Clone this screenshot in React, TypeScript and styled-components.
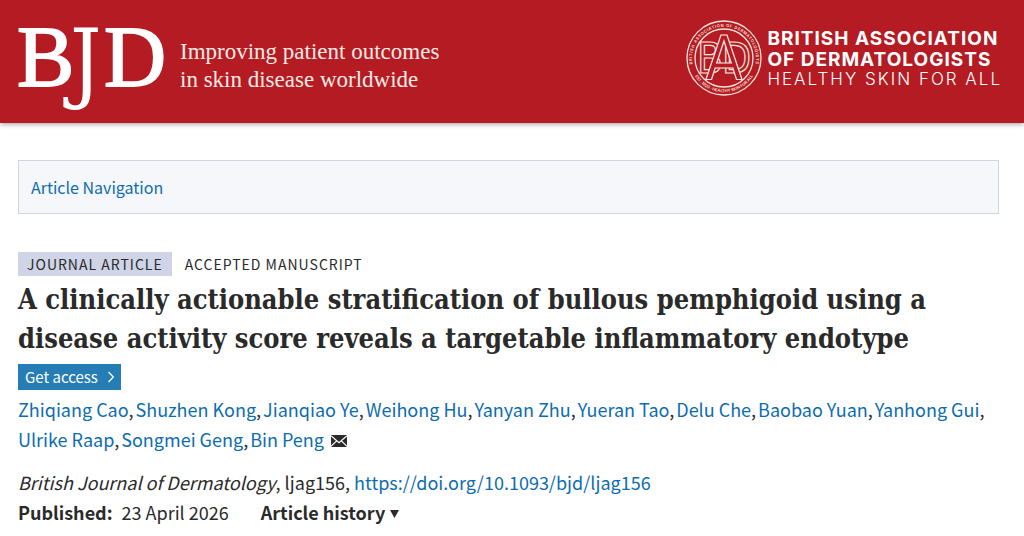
import React from "react";
import styled, { createGlobalStyle } from "styled-components";

const sans = `"Noto Sans CJK SC", "Noto Sans", sans-serif`;
const link = "#0e6cb0";
const ink = "#2a2a2a";

const GlobalStyle = createGlobalStyle`
  *, *::before, *::after { box-sizing: border-box; }
  body { margin: 0; background: #fff; color: ${ink}; font-family: ${sans}; }
`;

const Banner = styled.header`
  display: flex;
  justify-content: space-between;
  align-items: flex-start;
  padding: 20px 22px 11px 16px;
  background: #b41b22;
  color: #fff;
  box-shadow: 0 1px 5px rgba(0, 0, 0, 0.4);
`;

const Brand = styled.a`
  display: flex;
  align-items: flex-start;
  color: inherit;
  text-decoration: none;
`;

const Tagline = styled.span`
  margin: 18px 0 0 12px;
  font: 23px/28px "Liberation Serif", serif;
  color: #fdebe6;
`;

const Society = styled.a`
  display: flex;
  align-items: flex-start;
  gap: 5px;
  color: inherit;
  text-decoration: none;
`;

const SocietyName = styled.span`
  display: flex;
  flex-direction: column;
  margin-top: 8px;
  font-family: Inter, sans-serif;
`;

const SocietyLine = styled.span<{ $light?: boolean }>`
  font-size: ${(p) => (p.$light ? 17 : 19)}px;
  line-height: ${(p) => (p.$light ? 19 : 21)}px;
  font-weight: ${(p) => (p.$light ? 300 : 700)};
  letter-spacing: ${(p) => (p.$light ? 2 : 1)}px;
  white-space: nowrap;
`;

const Main = styled.main`
  padding: 37px 25px 8px 18px;
`;

const ArticleNav = styled.nav`
  display: flex;
  align-items: center;
  padding: 12px;
  border: 1px solid #cfd5e3;
  background: #f5f7fb;
  font-size: 16px;
  line-height: 28px;
`;

const TextLink = styled.a`
  color: ${link};
  text-decoration: none;
`;

const Labels = styled.div`
  display: flex;
  gap: 4px;
  margin-top: 38px;
`;

const Label = styled.span<{ $filled?: boolean }>`
  padding: 0 9px;
  background: ${(p) => (p.$filled ? "#cfd4e6" : "transparent")};
  font-size: 14px;
  line-height: 24px;
  letter-spacing: 1px;
  text-transform: uppercase;
`;

const Title = styled.h1`
  margin: 4px 0 6px;
  font: 700 27px/39px "DejaVu Serif Condensed", "DejaVu Serif", serif;
`;

const Access = styled.a`
  display: flex;
  width: fit-content;
  align-items: center;
  gap: 9px;
  padding: 0 6px 0 7px;
  background: #267db6;
  color: #fff;
  font-size: 15px;
  line-height: 26px;
  text-decoration: none;
`;

const Authors = styled.ul`
  display: flex;
  flex-wrap: wrap;
  gap: 0 2px;
  margin: 4px 0 0;
  padding: 0;
  list-style: none;
  font-size: 18px;
  line-height: 30px;
  svg { margin-left: 7px; }
`;

const Details = styled.div`
  margin-top: 13px;
  font-size: 18px;
  line-height: 30px;
`;

const Dates = styled.div`
  display: flex;
  gap: 32px;
`;

const PublishedLabel = styled.strong`
  margin-right: 9px;
`;

const History = styled.button`
  display: flex;
  align-items: center;
  gap: 5px;
  padding: 0;
  border: 0;
  background: none;
  color: inherit;
  font: inherit;
  font-weight: 700;
  svg { margin-top: 4px; }
`;

const BjdLogo = () => (
  <svg width="152" height="92" viewBox="0 0 152 92" fill="#fff" fontFamily="Liberation Serif, serif" overflow="visible" role="img" aria-label="BJD">
    <g stroke="#fff" strokeWidth="1.8">
      <text x="1" y="66" fontSize="86">B</text>
      <text x="88" y="66" fontSize="86">D</text>
    </g>
    <text x="54" y="72" fontSize="87" fontFamily="DejaVu Serif Condensed, DejaVu Serif, serif">J</text>
  </svg>
);

const Seal = () => (
  <svg width="76" height="76" viewBox="0 0 76 76" fill="none" stroke="#fbe3de" overflow="visible" aria-hidden="true">
    <defs>
      <path id="ring-top" d="M12 57.5 A32 32 0 1 1 64 57.5" />
      <path id="ring-bottom" d="M9 56 A34 34 0 0 0 67 56" />
    </defs>
    <circle cx="38" cy="38" r="37" strokeWidth="1.3" />
    <circle cx="38" cy="38" r="29" strokeWidth="1.3" />
    <g fontFamily="Liberation Sans Narrow, DejaVu Sans Condensed, sans-serif" strokeWidth="1.2">
      <text x="11" y="53" fontSize="42">B</text>
      <text x="36" y="53" fontSize="42">D</text>
      <text x="38" y="59" fontSize="60" textAnchor="middle" fill="#b41b22">A</text>
    </g>
    <g fontFamily="Inter, sans-serif" fontSize="4" fontWeight="600" fill="#fbe3de" stroke="none">
      <text textAnchor="middle" letterSpacing="0.6">
        <textPath href="#ring-top" startOffset="50%">BRITISH ASSOCIATION OF DERMATOLOGISTS</textPath>
      </text>
      <text textAnchor="middle">
        <textPath href="#ring-bottom" startOffset="50%">EST. 1920 · HEALTHY SKIN FOR ALL</textPath>
      </text>
    </g>
  </svg>
);

const Chevron = () => (
  <svg width="8" height="12" viewBox="0 0 8 12" fill="none" stroke="#fff" strokeWidth="1.3" aria-hidden="true">
    <path d="M1.5 1 6.3 6 1.5 11" />
  </svg>
);

const Envelope = () => (
  <svg width="16" height="12" viewBox="0 0 16 12" role="img" aria-label="Email author">
    <rect width="16" height="12" fill={ink} />
    <path d="M0 .8 8 7.6 16 .8M0 11.4 5.6 5.8M16 11.4 10.4 5.8" fill="none" stroke="#fff" strokeWidth="1.2" />
  </svg>
);

const Caret = () => (
  <svg width="9" height="8" viewBox="0 0 9 8" aria-hidden="true">
    <path d="M0 0h9L4.5 8z" fill={ink} />
  </svg>
);

const authors = [
  "Zhiqiang Cao", "Shuzhen Kong", "Jianqiao Ye", "Weihong Hu", "Yanyan Zhu", "Yueran Tao",
  "Delu Che", "Baobao Yuan", "Yanhong Gui", "Ulrike Raap", "Songmei Geng", "Bin Peng",
];

export default function App() {
  return (
    <>
      <GlobalStyle />
      <Banner>
        <Brand href="#">
          <BjdLogo />
          <Tagline>
            Improving patient outcomes
            <br />
            in skin disease worldwide
          </Tagline>
        </Brand>
        <Society href="#">
          <Seal />
          <SocietyName>
            <SocietyLine>BRITISH ASSOCIATION</SocietyLine>
            <SocietyLine>OF DERMATOLOGISTS</SocietyLine>
            <SocietyLine $light>HEALTHY SKIN FOR ALL</SocietyLine>
          </SocietyName>
        </Society>
      </Banner>
      <Main>
        <ArticleNav>
          <TextLink href="#">Article Navigation</TextLink>
        </ArticleNav>
        <Labels>
          <Label $filled>Journal Article</Label>
          <Label>Accepted manuscript</Label>
        </Labels>
        <Title>
          A clinically actionable stratification of bullous pemphigoid using a disease activity score
          reveals a targetable inflammatory endotype
        </Title>
        <Access href="#">
          Get access
          <Chevron />
        </Access>
        <Authors>
          {authors.map((name, i) => (
            <li key={name}>
              <TextLink href="#">{name}</TextLink>
              {i < authors.length - 1 ? "," : <Envelope />}
            </li>
          ))}
        </Authors>
        <Details>
          <div>
            <em>British Journal of Dermatology</em>, ljag156,{" "}
            <TextLink href="#">https://doi.org/10.1093/bjd/ljag156</TextLink>
          </div>
          <Dates>
            <span>
              <PublishedLabel>Published:</PublishedLabel>
              23 April 2026
            </span>
            <History type="button">
              Article history
              <Caret />
            </History>
          </Dates>
        </Details>
      </Main>
    </>
  );
}
